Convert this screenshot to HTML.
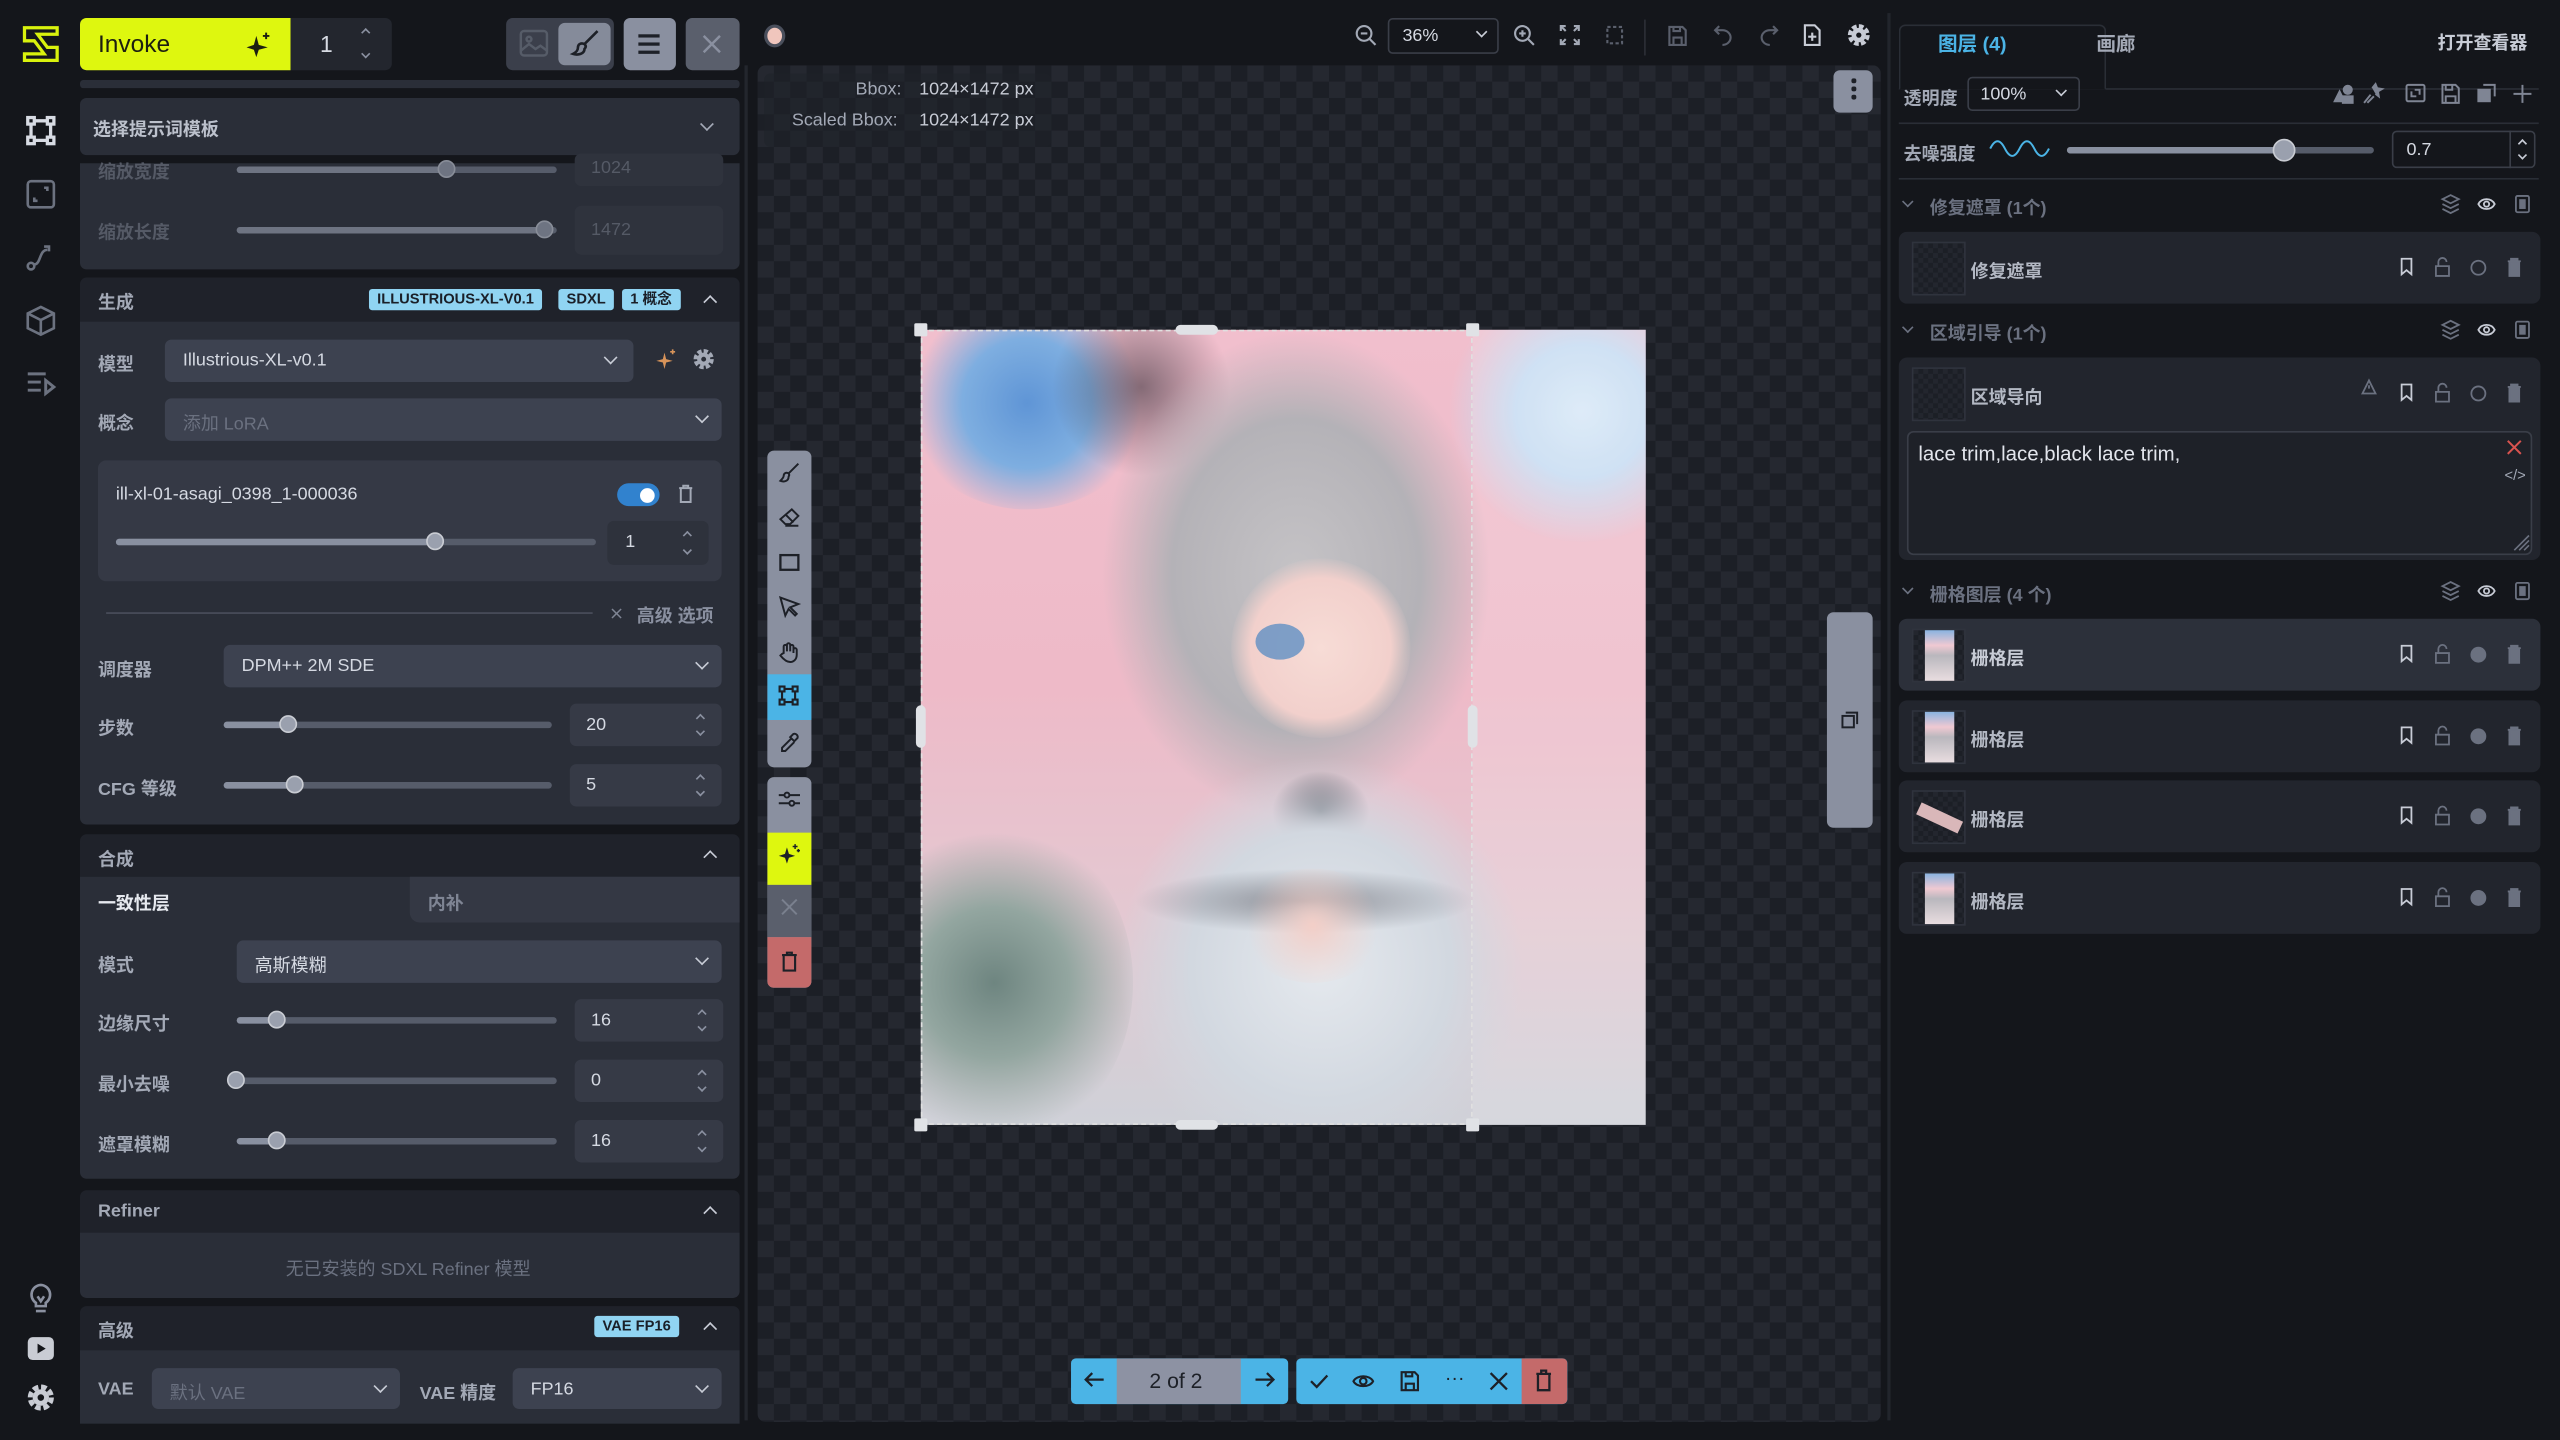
<!DOCTYPE html>
<html><head><meta charset="utf-8">
<style>
html,body{margin:0;padding:0;width:2560px;height:1440px;overflow:hidden;background:#14161b;}
#w{position:absolute;left:0;top:0;width:1568px;height:882px;transform:scale(1.632653);transform-origin:0 0;background:#14161b;font-family:"Liberation Sans","Noto Sans CJK SC",sans-serif;color:#c8ccd6;}
.a{position:absolute;}
.t{position:absolute;font-size:11px;white-space:nowrap;}
.lbl{position:absolute;font-size:11px;font-weight:bold;color:#a3a9b6;white-space:nowrap;}
.hdr{position:absolute;background:#1f222a;border-radius:4px 4px 0 0;}
.box{position:absolute;background:#2a2e38;}
.inp{position:absolute;background:#3d4250;border-radius:4px;}
.num{position:absolute;background:#363a46;border-radius:4px;font-size:11px;color:#d5d9e2;}
.num::before{content:"";position:absolute;right:11px;top:7px;width:3px;height:3px;border-left:1px solid #8a90a0;border-top:1px solid #8a90a0;transform:rotate(45deg);}
.num::after{content:"";position:absolute;right:11px;bottom:7px;width:3px;height:3px;border-right:1px solid #8a90a0;border-bottom:1px solid #8a90a0;transform:rotate(45deg);}
.track{position:absolute;height:4px;border-radius:2px;background:#565c6a;}
.fill{position:absolute;left:0;top:0;height:4px;border-radius:2px;background:#8990a0;}
.knob{position:absolute;width:11px;height:11px;border-radius:50%;background:#9aa0ae;border:1.5px solid #c9ccd3;box-sizing:border-box;top:-4px;}
.badge{position:absolute;background:#90d4f2;color:#1a1f28;font-size:9px;font-weight:bold;border-radius:2px;height:13px;line-height:13px;padding:0 5px;}
.chev{position:absolute;width:5px;height:5px;border-right:1.5px solid #c8ccd6;border-bottom:1.5px solid #c8ccd6;transform:rotate(45deg);}
.chevu{position:absolute;width:5px;height:5px;border-left:1.5px solid #c8ccd6;border-top:1.5px solid #c8ccd6;transform:rotate(45deg);}
.row{position:absolute;left:1163px;width:393px;background:#22252d;border-radius:5px;}
.thumb{position:absolute;left:8px;width:33px;height:33px;border:1px solid #2f333d;background:repeating-conic-gradient(#1c1f26 0 25%,#23262e 0 50%) 0 0/6px 6px;box-sizing:border-box;}
.bl{position:absolute;border-radius:50%;}
svg{position:absolute;overflow:visible;}
</style></head><body><div id="w">

<!-- left icon bar -->
<svg style="left:13px;top:15px" width="24" height="24" viewBox="0 0 24 24"><path d="M2 2H22V6H10L16 14H22V22H2V18H14L8 10H2Z" fill="none" stroke="#d9f20d" stroke-width="2"/></svg>
<svg style="left:16px;top:71px" width="18" height="18" viewBox="0 0 18 18" fill="none" stroke="#d7dbe3" stroke-width="2"><rect x="1" y="1" width="4" height="4"/><rect x="13" y="1" width="4" height="4"/><rect x="1" y="13" width="4" height="4"/><rect x="13" y="13" width="4" height="4"/><path d="M5 3H13M5 15H13M3 5V13M15 5V13"/></svg>
<svg style="left:16px;top:110px" width="18" height="18" viewBox="0 0 18 18" fill="none" stroke="#6c7280" stroke-width="1.6"><rect x="1" y="1" width="16" height="16" rx="2"/><path d="M11 5h2v2M5 11v2h2"/></svg>
<svg style="left:16px;top:148px" width="18" height="18" viewBox="0 0 18 18" fill="none" stroke="#6c7280" stroke-width="1.6"><circle cx="3" cy="15" r="2"/><path d="M5 14c4 0 3-9 8-9M11 3h3v3"/></svg>
<svg style="left:16px;top:187px" width="18" height="19" viewBox="0 0 18 19" fill="none" stroke="#6c7280" stroke-width="1.6"><path d="M9 1L17 5V14L9 18L1 14V5Z M1 5L9 9L17 5 M9 9V18"/></svg>
<svg style="left:16px;top:227px" width="18" height="16" viewBox="0 0 18 16" fill="none" stroke="#6c7280" stroke-width="1.8"><path d="M1 2H12M1 7H9M1 12H9M12 6V14L17 10Z"/></svg>
<svg style="left:17px;top:786px" width="16" height="18" viewBox="0 0 16 18" fill="none" stroke="#8a90a0" stroke-width="1.6"><path d="M8 1a6 6 0 0 0-3 11v2h6v-2A6 6 0 0 0 8 1zM5 17h6M6 8l2 3 2-3"/></svg>
<svg style="left:17px;top:819px" width="16" height="14" viewBox="0 0 16 14"><rect x="0" y="0" width="16" height="14" rx="3" fill="#c9ccd4"/><path d="M6 4L11 7L6 10Z" fill="#14161b"/></svg>
<svg style="left:17px;top:848px" width="16" height="16" viewBox="0 0 16 16"><circle cx="8" cy="8" r="6.5" fill="none" stroke="#c9ccd4" stroke-width="3" stroke-dasharray="3.4 1.7"/><circle cx="8" cy="8" r="5" fill="#c9ccd4"/><circle cx="8" cy="8" r="2" fill="#14161b"/></svg>

<!-- top left controls -->
<div class="a" style="left:49px;top:11px;width:129px;height:32px;background:#def70f;border-radius:4px 0 0 4px;"></div>
<div class="t" style="left:60px;top:19px;font-size:15px;color:#1c1f10;">Invoke</div>
<svg style="left:151px;top:20px" width="15" height="15" viewBox="0 0 15 15"><path d="M6 2L7.5 7.5L13 9L7.5 10.5L6 15L4.5 10.5L0 9L4.5 7.5Z" fill="#1c1f10"/><path d="M12 0v4M10 2h4" stroke="#1c1f10" stroke-width="1.2"/></svg>
<div class="a" style="left:178px;top:11px;width:62px;height:32px;background:#23262e;border-radius:0 4px 4px 0;"></div>
<div class="t" style="left:196px;top:19px;font-size:14px;color:#d7dbe3;">1</div>
<div class="chevu" style="left:222px;top:18px;width:3px;height:3px;border-color:#8a90a0;border-width:1px"></div>
<div class="chev" style="left:222px;top:31px;width:3px;height:3px;border-color:#8a90a0;border-width:1px"></div>
<div class="a" style="left:310px;top:11px;width:66px;height:32px;background:#3b3f4b;border-radius:4px;"></div>
<div class="a" style="left:342px;top:14px;width:32px;height:26px;background:#858b9a;border-radius:4px;"></div>
<svg style="left:318px;top:18px" width="18" height="17" viewBox="0 0 18 17" fill="none" stroke="#565c68" stroke-width="1.5"><rect x="1" y="1" width="16" height="15" rx="2"/><circle cx="6" cy="6" r="1.5"/><path d="M1 13l5-4 4 3 3-2 4 3"/></svg>
<svg style="left:350px;top:18px" width="17" height="17" viewBox="0 0 17 17" fill="none" stroke="#1d2027" stroke-width="1.6"><path d="M16 1L8 9M8 9c-2-1-4 0-4 2 0 2-1 3-3 4 3 1 7 0 7-3 1-1 1-2 0-3z"/></svg>
<div class="a" style="left:382px;top:11px;width:32px;height:32px;background:#8a90a0;border-radius:4px;"></div>
<div class="a" style="left:391px;top:21px;width:13px;height:2px;background:#1d2027;box-shadow:0 5px 0 #1d2027,0 10px 0 #1d2027;"></div>
<div class="a" style="left:420px;top:11px;width:33px;height:32px;background:#5a5f6c;border-radius:4px;"></div>
<svg style="left:430px;top:21px" width="12" height="12" viewBox="0 0 12 12" stroke="#8a90a0" stroke-width="1.5"><path d="M1 1L11 11M11 1L1 11"/></svg>
<div class="a" style="left:49px;top:49px;width:404px;height:5px;background:#2a2e38;border-radius:2px;"></div>

<!-- template select -->
<div class="a" style="left:49px;top:60px;width:404px;height:35px;background:#2a2e38;border-radius:4px;"></div>
<div class="lbl" style="left:57px;top:71px;color:#bcc1cc;">选择提示词模板</div>
<div class="chev" style="left:430px;top:73px;border-color:#a3a9b6;"></div>

<!-- scroll remnant -->
<div class="a" style="left:49px;top:100px;width:404px;height:65px;background:#2a2e38;border-radius:0 0 4px 4px;"></div>
<div class="lbl" style="left:60px;top:97px;color:#555a66;">缩放宽度</div>
<div class="track" style="left:145px;top:102px;width:196px;"><div class="fill" style="width:128px;background:#6e7482"></div><div class="knob" style="left:123px;background:#6e7482;border-color:#888d98"></div></div>
<div class="a" style="left:352px;top:94px;width:91px;height:20px;background:#2f333d;border-radius:4px;"></div>
<div class="t" style="left:362px;top:97px;color:#555a66;">1024</div>
<div class="lbl" style="left:60px;top:134px;color:#555a66;">缩放长度</div>
<div class="track" style="left:145px;top:139px;width:196px;"><div class="fill" style="width:190px;background:#6e7482"></div><div class="knob" style="left:183px;background:#6e7482;border-color:#888d98"></div></div>
<div class="a" style="left:352px;top:126px;width:91px;height:30px;background:#2f333d;border-radius:4px;"></div>
<div class="t" style="left:362px;top:135px;color:#555a66;">1472</div>

<!-- 生成 -->
<div class="hdr" style="left:49px;top:170px;width:404px;height:27px;"></div>
<div class="lbl" style="left:60px;top:177px;">生成</div>
<div class="badge" style="left:226px;top:177px;">ILLUSTRIOUS-XL-V0.1</div>
<div class="badge" style="left:342px;top:177px;">SDXL</div>
<div class="badge" style="left:381px;top:177px;">1 概念</div>
<div class="chevu" style="left:432px;top:182px;"></div>
<div class="box" style="left:49px;top:197px;width:404px;height:308px;border-radius:0 0 4px 4px;"></div>
<div class="lbl" style="left:60px;top:215px;">模型</div>
<div class="inp" style="left:101px;top:208px;width:287px;height:26px;"></div>
<div class="t" style="left:112px;top:215px;color:#d5d9e2;">Illustrious-XL-v0.1</div>
<div class="chev" style="left:371px;top:216px;"></div>
<svg style="left:402px;top:214px" width="12" height="12" viewBox="0 0 12 12"><path d="M5 2L6 6L10 7L6 8L5 12L4 8L0 7L4 6Z" fill="#d8945a"/><path d="M10 0v3M8.5 1.5h3" stroke="#d8945a"/></svg>
<svg style="left:425px;top:214px" width="12" height="12" viewBox="0 0 12 12"><circle cx="6" cy="6" r="5" fill="none" stroke="#a3a9b6" stroke-width="2.4" stroke-dasharray="2.6 1.3"/><circle cx="6" cy="6" r="4" fill="#a3a9b6"/><circle cx="6" cy="6" r="1.5" fill="#2a2e38"/></svg>
<div class="lbl" style="left:60px;top:251px;">概念</div>
<div class="inp" style="left:101px;top:244px;width:341px;height:26px;"></div>
<div class="t" style="left:112px;top:251px;color:#6b7180;">添加 LoRA</div>
<div class="chev" style="left:427px;top:252px;"></div>
<div class="a" style="left:60px;top:282px;width:382px;height:74px;background:#353945;border-radius:5px;"></div>
<div class="t" style="left:71px;top:297px;color:#d5d9e2;">ill-xl-01-asagi_0398_1-000036</div>
<div class="a" style="left:378px;top:296px;width:26px;height:14px;background:#3182ce;border-radius:7px;"></div>
<div class="a" style="left:392px;top:299px;width:9px;height:9px;background:#fff;border-radius:50%;"></div>
<svg style="left:416px;top:297px" width="8" height="11" viewBox="0 0 8 11" fill="none" stroke="#a3a9b6" stroke-width="1.2"><path d="M0 2H8M2.5 2V0.5H5.5V2M1 2V10.5H7V2"/></svg>
<div class="track" style="left:71px;top:330px;width:294px;"><div class="fill" style="width:197px"></div><div class="knob" style="left:190px"></div></div>
<div class="num" style="left:372px;top:319px;width:62px;height:27px;background:#2e323c;"></div>
<div class="t" style="left:383px;top:326px;color:#d5d9e2;">1</div>
<div class="a" style="left:65px;top:375px;width:298px;height:1px;background:#4a4f5c;"></div>
<div class="t" style="left:373px;top:369px;color:#7f8594;">⨯</div>
<div class="lbl" style="left:390px;top:369px;color:#8a90a0;">高级 选项</div>
<div class="lbl" style="left:60px;top:402px;">调度器</div>
<div class="inp" style="left:137px;top:395px;width:305px;height:26px;"></div>
<div class="t" style="left:148px;top:402px;color:#d5d9e2;">DPM++ 2M SDE</div>
<div class="chev" style="left:427px;top:403px;"></div>
<div class="lbl" style="left:60px;top:438px;">步数</div>
<div class="track" style="left:137px;top:442px;width:201px;"><div class="fill" style="width:40px"></div><div class="knob" style="left:34px"></div></div>
<div class="num" style="left:349px;top:431px;width:93px;height:26px;"></div>
<div class="t" style="left:359px;top:438px;color:#d5d9e2;">20</div>
<div class="lbl" style="left:60px;top:475px;">CFG 等级</div>
<div class="track" style="left:137px;top:479px;width:201px;"><div class="fill" style="width:44px"></div><div class="knob" style="left:38px"></div></div>
<div class="num" style="left:349px;top:468px;width:93px;height:26px;"></div>
<div class="t" style="left:359px;top:475px;color:#d5d9e2;">5</div>

<!-- 合成 -->
<div class="hdr" style="left:49px;top:511px;width:404px;height:26px;"></div>
<div class="lbl" style="left:60px;top:518px;">合成</div>
<div class="chevu" style="left:432px;top:522px;"></div>
<div class="box" style="left:49px;top:537px;width:404px;height:185px;border-radius:0 0 4px 4px;"></div>
<div class="a" style="left:251px;top:537px;width:202px;height:28px;background:#343844;border-radius:0 0 0 6px;"></div>
<div class="lbl" style="left:60px;top:545px;color:#e6e9ef;">一致性层</div>
<div class="lbl" style="left:262px;top:545px;color:#7f8594;">内补</div>
<div class="lbl" style="left:60px;top:583px;">模式</div>
<div class="inp" style="left:145px;top:576px;width:297px;height:26px;"></div>
<div class="t" style="left:156px;top:583px;color:#d5d9e2;">高斯模糊</div>
<div class="chev" style="left:427px;top:584px;"></div>
<div class="lbl" style="left:60px;top:619px;">边缘尺寸</div>
<div class="track" style="left:145px;top:623px;width:196px;"><div class="fill" style="width:27px"></div><div class="knob" style="left:19px"></div></div>
<div class="num" style="left:352px;top:612px;width:91px;height:26px;"></div>
<div class="t" style="left:362px;top:619px;color:#d5d9e2;">16</div>
<div class="lbl" style="left:60px;top:656px;">最小去噪</div>
<div class="track" style="left:145px;top:660px;width:196px;"><div class="knob" style="left:-6px"></div></div>
<div class="num" style="left:352px;top:649px;width:91px;height:26px;"></div>
<div class="t" style="left:362px;top:656px;color:#d5d9e2;">0</div>
<div class="lbl" style="left:60px;top:693px;">遮罩模糊</div>
<div class="track" style="left:145px;top:697px;width:196px;"><div class="fill" style="width:27px"></div><div class="knob" style="left:19px"></div></div>
<div class="num" style="left:352px;top:686px;width:91px;height:26px;"></div>
<div class="t" style="left:362px;top:693px;color:#d5d9e2;">16</div>

<!-- Refiner -->
<div class="hdr" style="left:49px;top:729px;width:404px;height:26px;"></div>
<div class="lbl" style="left:60px;top:736px;">Refiner</div>
<div class="chevu" style="left:432px;top:740px;"></div>
<div class="box" style="left:49px;top:755px;width:404px;height:40px;border-radius:0 0 4px 4px;"></div>
<div class="t" style="left:175px;top:769px;color:#6b7180;">无已安装的 SDXL Refiner 模型</div>

<!-- 高级 -->
<div class="hdr" style="left:49px;top:800px;width:404px;height:27px;"></div>
<div class="lbl" style="left:60px;top:807px;">高级</div>
<div class="badge" style="left:364px;top:806px;">VAE FP16</div>
<div class="chevu" style="left:432px;top:811px;"></div>
<div class="box" style="left:49px;top:827px;width:404px;height:45px;"></div>
<div class="lbl" style="left:60px;top:845px;">VAE</div>
<div class="inp" style="left:93px;top:838px;width:152px;height:25px;"></div>
<div class="t" style="left:104px;top:845px;color:#6b7180;">默认 VAE</div>
<div class="chev" style="left:230px;top:846px;"></div>
<div class="lbl" style="left:257px;top:845px;">VAE 精度</div>
<div class="inp" style="left:314px;top:838px;width:128px;height:25px;"></div>
<div class="t" style="left:325px;top:845px;color:#d5d9e2;">FP16</div>
<div class="chev" style="left:427px;top:846px;"></div>
<div class="a" style="left:456px;top:40px;width:2px;height:830px;background:#23262d;"></div>

<!-- canvas toolbar -->
<div class="a" style="left:468px;top:15px;width:13px;height:14px;border-radius:50%;background:#f0c6bd;border:2px solid #4a4f5c;box-sizing:border-box;"></div>
<svg style="left:830px;top:15px" width="13" height="13" viewBox="0 0 13 13" fill="none" stroke="#a3a9b6" stroke-width="1.3"><circle cx="5.5" cy="5.5" r="4.5"/><path d="M9 9l3.5 3.5M3.5 5.5h4"/></svg>
<div class="a" style="left:850px;top:11px;width:68px;height:22px;border:1px solid #3a3e48;border-radius:3px;box-sizing:border-box;"></div>
<div class="t" style="left:859px;top:16px;color:#d5d9e2;">36%</div>
<div class="chev" style="left:905px;top:17px;width:4px;height:4px;border-width:1px;"></div>
<svg style="left:927px;top:15px" width="13" height="13" viewBox="0 0 13 13" fill="none" stroke="#a3a9b6" stroke-width="1.3"><circle cx="5.5" cy="5.5" r="4.5"/><path d="M9 9l3.5 3.5M3.5 5.5h4M5.5 3.5v4"/></svg>
<svg style="left:956px;top:16px" width="11" height="11" viewBox="0 0 11 11" fill="none" stroke="#a3a9b6" stroke-width="1.3"><path d="M0 3V0H3M8 0H11V3M11 8V11H8M3 11H0V8M3 3L0 0M8 3L11 0M8 8L11 11M3 8L0 11"/></svg>
<svg style="left:984px;top:16px" width="10" height="11" viewBox="0 0 10 11" fill="none" stroke="#5a5f6c" stroke-width="1.3" stroke-dasharray="2 1.5"><rect x="0.5" y="0.5" width="9" height="10"/></svg>
<div class="a" style="left:1007px;top:12px;width:1px;height:22px;background:#2c2f37;"></div>
<svg style="left:1022px;top:16px" width="11" height="12" viewBox="0 0 11 12" fill="none" stroke="#5a5f6c" stroke-width="1.3"><path d="M0.5 0.5H8.5L10.5 2.5V11.5H0.5Z M3 11.5V7H8V11.5M3 0.5V3H7V0.5"/></svg>
<svg style="left:1050px;top:15px" width="11" height="13" viewBox="0 0 11 13" fill="none" stroke="#5a5f6c" stroke-width="1.3"><path d="M3 1L0.5 3.5L3 6M1 3.5H5a5 4.5 0 0 1 0 9"/></svg>
<svg style="left:1078px;top:15px" width="11" height="13" viewBox="0 0 11 13" fill="none" stroke="#5a5f6c" stroke-width="1.3"><path d="M8 1L10.5 3.5L8 6M10 3.5H6a5 4.5 0 0 0 0 9"/></svg>
<svg style="left:1105px;top:15px" width="10" height="13" viewBox="0 0 10 13" fill="none" stroke="#c8ccd6" stroke-width="1.3"><path d="M0.5 0.5H6.5L9.5 3.5V12.5H0.5Z M5 5V10M2.5 7.5H7.5"/></svg>
<svg style="left:1132px;top:15px" width="13" height="13" viewBox="0 0 13 13"><circle cx="6.5" cy="6.5" r="5.5" fill="none" stroke="#c8ccd6" stroke-width="2.4" stroke-dasharray="2.9 1.4"/><circle cx="6.5" cy="6.5" r="4.4" fill="#c8ccd6"/><circle cx="6.5" cy="6.5" r="1.6" fill="#14161b"/></svg>

<!-- canvas -->
<div class="a" style="left:464px;top:40px;width:688px;height:831px;border-radius:5px;background:repeating-conic-gradient(#1c1f26 0 25%,#252830 0 50%) 0 0/20px 20px;"></div>
<div class="a" style="left:468px;top:45px;width:176px;height:45px;background:rgba(30,33,40,.5);border-radius:4px;"></div>
<div class="t" style="left:524px;top:49px;color:#a3a9b6;">Bbox:</div>
<div class="t" style="left:563px;top:49px;color:#c8ccd6;">1024×1472 px</div>
<div class="t" style="left:485px;top:68px;color:#a3a9b6;">Scaled Bbox:</div>
<div class="t" style="left:563px;top:68px;color:#c8ccd6;">1024×1472 px</div>
<div class="a" style="left:1123px;top:43px;width:24px;height:26px;background:#8a90a0;border-radius:4px;"></div>
<div class="a" style="left:1134px;top:48px;width:2.5px;height:2.5px;background:#1d2027;border-radius:50%;box-shadow:0 5px 0 #1d2027,0 10px 0 #1d2027;"></div>
<div class="a" style="left:1119px;top:375px;width:28px;height:132px;background:#8a90a0;border-radius:4px;"></div>
<svg style="left:1128px;top:436px" width="10" height="10" viewBox="0 0 10 10" fill="none" stroke="#1d2027" stroke-width="1.2"><rect x="0.5" y="2.5" width="7" height="7"/><path d="M2.5 0.5H9.5V7.5"/></svg>

<!-- image -->
<div class="a" style="left:564px;top:202px;width:444px;height:487px;overflow:hidden;background:linear-gradient(180deg,#f1bfcd 0%,#eebac8 45%,#e3c9d2 75%,#cfd1d8 100%);">
 <div class="bl" style="left:-10px;top:-20px;width:150px;height:130px;background:radial-gradient(circle,#5f95d6 0,#7eaee0 40%,rgba(240,190,205,0) 70%);"></div>
 <div class="bl" style="left:80px;top:-20px;width:110px;height:110px;background:radial-gradient(circle,rgba(60,50,60,.6) 0,rgba(60,50,60,0) 70%);"></div>
 <div class="bl" style="left:320px;top:-30px;width:170px;height:160px;background:radial-gradient(circle,#d8e8f7 0,#c7dcf2 35%,rgba(240,200,215,0) 70%);"></div>
 <div class="bl" style="left:-40px;top:300px;width:170px;height:200px;background:radial-gradient(circle,#6e8580 0,#93a6a0 35%,rgba(220,200,210,0) 70%);"></div>
 <div class="a" style="left:338px;top:0;width:106px;height:487px;background:rgba(255,255,255,.15);"></div>
 <div class="bl" style="left:110px;top:0;width:240px;height:300px;background:radial-gradient(ellipse,#c5c3c6 0,#b4b2b7 45%,rgba(180,178,185,0) 70%);"></div>
 <div class="bl" style="left:190px;top:140px;width:110px;height:110px;background:radial-gradient(circle,#f7dcd6 0,#f2d0cc 55%,rgba(240,205,205,0) 72%);"></div>
 <div class="bl" style="left:205px;top:180px;width:30px;height:22px;background:#4c86c2;opacity:.7;"></div>
 <div class="a" style="left:215px;top:270px;width:60px;height:50px;background:radial-gradient(ellipse,#2a2c36 0,rgba(40,42,54,0) 70%);"></div>
 <div class="bl" style="left:120px;top:260px;width:250px;height:260px;background:radial-gradient(ellipse,#e5e9ee 0,#d2d8e0 45%,rgba(200,205,215,0) 70%);"></div>
 <div class="a" style="left:130px;top:330px;width:210px;height:40px;background:radial-gradient(ellipse,rgba(50,50,60,.45) 0,rgba(50,50,60,0) 70%);"></div>
 <div class="bl" style="left:195px;top:330px;width:90px;height:70px;background:radial-gradient(circle,#f3cfc8 0,rgba(240,205,200,0) 70%);"></div>
</div>
<div class="a" style="left:564px;top:202px;width:338px;height:487px;border:1px dashed #e0e0e0;box-sizing:border-box;"></div>
<div class="a" style="left:560px;top:198px;width:8px;height:8px;background:#e0e2e6;border-radius:1px;"></div>
<div class="a" style="left:898px;top:198px;width:8px;height:8px;background:#e0e2e6;border-radius:1px;"></div>
<div class="a" style="left:560px;top:685px;width:8px;height:8px;background:#e0e2e6;border-radius:1px;"></div>
<div class="a" style="left:898px;top:685px;width:8px;height:8px;background:#e0e2e6;border-radius:1px;"></div>
<div class="a" style="left:720px;top:199px;width:26px;height:6px;background:#e0e2e6;border-radius:3px;"></div>
<div class="a" style="left:720px;top:686px;width:26px;height:6px;background:#e0e2e6;border-radius:3px;"></div>
<div class="a" style="left:561px;top:432px;width:6px;height:26px;background:#e0e2e6;border-radius:3px;"></div>
<div class="a" style="left:899px;top:432px;width:6px;height:26px;background:#e0e2e6;border-radius:3px;"></div>

<!-- tool bar -->
<div class="a" style="left:470px;top:276px;width:27px;height:194px;background:#8a90a0;border-radius:4px;overflow:hidden;">
 <div class="a" style="left:0;top:137px;width:27px;height:28px;background:#4bb4e6;"></div>
</div>
<svg style="left:477px;top:283px" width="13" height="13" viewBox="0 0 13 13" fill="none" stroke="#1d2027" stroke-width="1.2"><path d="M12 1L6 7M6 7c-1.5-1-3 0-3 1.5 0 1-1 2-2 3 2.5 1 5 0 5-2.5 .5-.8.5-1.5 0-2z"/></svg>
<svg style="left:477px;top:311px" width="13" height="12" viewBox="0 0 13 12" fill="none" stroke="#1d2027" stroke-width="1.2"><path d="M8 1L12 5L7 10H4L1 7ZM4 4L9 9M4 11H12"/></svg>
<svg style="left:477px;top:339px" width="13" height="11" viewBox="0 0 13 11" fill="none" stroke="#1d2027" stroke-width="1.4"><rect x="1" y="1" width="11" height="9"/></svg>
<svg style="left:477px;top:365px" width="13" height="13" viewBox="0 0 13 13" fill="none" stroke="#1d2027" stroke-width="1.2"><path d="M1 1L12 5L7 7L11 11L10 12L6 8L4 12Z"/></svg>
<svg style="left:477px;top:393px" width="13" height="13" viewBox="0 0 13 13" fill="none" stroke="#1d2027" stroke-width="1.2"><path d="M3 7V3a1 1 0 0 1 2 0V6V2a1 1 0 0 1 2 0V6V3a1 1 0 0 1 2 0V7V5a1 1 0 0 1 2 0V8c0 3-2 4.5-4 4.5S3 11 1 8.5L2 7.5Z"/></svg>
<svg style="left:477px;top:420px" width="12" height="12" viewBox="0 0 12 12" fill="none" stroke="#1d2027" stroke-width="1.3"><rect x="0.5" y="0.5" width="3" height="3"/><rect x="8.5" y="0.5" width="3" height="3"/><rect x="0.5" y="8.5" width="3" height="3"/><rect x="8.5" y="8.5" width="3" height="3"/><path d="M3.5 2H8.5M3.5 10H8.5M2 3.5V8.5M10 3.5V8.5"/></svg>
<svg style="left:477px;top:448px" width="13" height="13" viewBox="0 0 13 13" fill="none" stroke="#1d2027" stroke-width="1.2"><path d="M9 1.5a2 2 0 0 1 2.5 2.5L9.5 6L7 3.5ZM7.5 4.5L2 10V12H4L9.5 6.5"/></svg>
<div class="a" style="left:470px;top:476px;width:27px;height:129px;background:#8a90a0;border-radius:4px;overflow:hidden;">
 <div class="a" style="left:0;top:34px;width:27px;height:32px;background:#def70f;"></div>
 <div class="a" style="left:0;top:66px;width:27px;height:32px;background:#5a5f6c;"></div>
 <div class="a" style="left:0;top:98px;width:27px;height:31px;background:#c46a6a;"></div>
</div>
<svg style="left:477px;top:484px" width="13" height="11" viewBox="0 0 13 11" fill="none" stroke="#1d2027" stroke-width="1.2"><path d="M0 3H13M0 8H13"/><circle cx="5" cy="3" r="1.5" fill="#8a90a0"/><circle cx="8" cy="8" r="1.5" fill="#8a90a0"/></svg>
<svg style="left:477px;top:516px" width="13" height="13" viewBox="0 0 13 13"><path d="M5 3L6.2 7L10 8.2L6.2 9.4L5 13L3.8 9.4L0 8.2L3.8 7Z" fill="#1d2027"/><path d="M10 1v3M8.5 2.5h3M12 4v2M11 5h2" stroke="#1d2027" stroke-width="0.9"/></svg>
<svg style="left:479px;top:551px" width="9" height="9" viewBox="0 0 9 9" stroke="#7a808e" stroke-width="1.2"><path d="M0 0L9 9M9 0L0 9"/></svg>
<svg style="left:479px;top:583px" width="9" height="12" viewBox="0 0 9 12" fill="none" stroke="#1d2027" stroke-width="1.3"><path d="M0 2H9M3 2V0.5H6V2M1 2V11.5H8V2"/></svg>

<!-- bottom nav -->
<div class="a" style="left:656px;top:832px;width:133px;height:28px;background:#4bb4e6;border-radius:3px;overflow:hidden;"><div class="a" style="left:28px;top:0;width:76px;height:28px;background:#8d92a3;"></div></div>
<svg style="left:664px;top:840px" width="12" height="10" viewBox="0 0 12 10" fill="none" stroke="#1d2027" stroke-width="1.4"><path d="M12 5H1M5 1L1 5L5 9"/></svg>
<div class="t" style="left:704px;top:838px;font-size:13px;color:#1d2027;">2 of 2</div>
<svg style="left:769px;top:840px" width="12" height="10" viewBox="0 0 12 10" fill="none" stroke="#1d2027" stroke-width="1.4"><path d="M0 5H11M7 1L11 5L7 9"/></svg>
<div class="a" style="left:794px;top:832px;width:166px;height:28px;background:#4bb4e6;border-radius:3px;overflow:hidden;"><div class="a" style="left:138px;top:0;width:28px;height:28px;background:#c46a6a;"></div></div>
<svg style="left:802px;top:841px" width="12" height="10" viewBox="0 0 12 10" fill="none" stroke="#1d2027" stroke-width="1.4"><path d="M1 5L4.5 8.5L11 1.5"/></svg>
<svg style="left:828px;top:841px" width="14" height="10" viewBox="0 0 14 10" fill="none" stroke="#1d2027" stroke-width="1.3"><path d="M1 5C3 1 11 1 13 5C11 9 3 9 1 5Z"/><circle cx="7" cy="5" r="2"/></svg>
<svg style="left:858px;top:840px" width="11" height="12" viewBox="0 0 11 12" fill="none" stroke="#1d2027" stroke-width="1.3"><path d="M0.5 0.5H8.5L10.5 2.5V11.5H0.5Z M3 11.5V7.5H8V11.5M3 0.5V3H7V0.5"/></svg>
<div class="t" style="left:885px;top:837px;font-size:12px;color:#1d2027;">···</div>
<svg style="left:913px;top:841px" width="10" height="10" viewBox="0 0 10 10" stroke="#1d2027" stroke-width="1.4"><path d="M0 0L10 10M10 0L0 10"/></svg>
<svg style="left:941px;top:839px" width="9" height="13" viewBox="0 0 9 13" fill="none" stroke="#1d2027" stroke-width="1.4"><path d="M0 2.5H9M3 2.5V0.5H6V2.5M1 2.5V12.5H8V2.5"/></svg>

<!-- right panel -->
<div class="a" style="left:1156px;top:8px;width:2px;height:862px;background:#22252c;"></div>
<div class="a" style="left:1163px;top:54px;width:392px;height:1px;background:#2a2e36;"></div>
<div class="a" style="left:1163px;top:15px;width:127px;height:40px;border:1px solid #2a2e36;border-bottom:1px solid #14161b;border-radius:4px 4px 0 0;background:#14161b;box-sizing:border-box;"></div>
<div class="lbl" style="left:1187px;top:18px;color:#4bb4e6;font-size:12px;">图层 (4)</div>
<div class="lbl" style="left:1284px;top:18px;color:#a3a9b6;font-size:12px;">画廊</div>
<div class="lbl" style="left:1493px;top:18px;color:#c8ccd6;">打开查看器</div>
<div class="lbl" style="left:1166px;top:52px;">透明度</div>
<div class="a" style="left:1205px;top:47px;width:69px;height:21px;border:1px solid #3a3e48;border-radius:3px;box-sizing:border-box;"></div>
<div class="t" style="left:1213px;top:52px;color:#d5d9e2;">100%</div>
<div class="chev" style="left:1260px;top:53px;width:4px;height:4px;border-width:1px;"></div>
<svg style="left:1429px;top:51px" width="120" height="13" viewBox="0 0 120 13" fill="none" stroke="#7f8594" stroke-width="1.2">
<path d="M1 11L4 5L7 11Z" fill="#7f8594"/><circle cx="9" cy="4" r="2.5" fill="#7f8594"/><rect x="6" y="8" width="6" height="4" fill="#7f8594"/>
<path d="M24 3L26 0.5L27 3L30 3.5L27.5 5L28 8L26 6.5" fill="#7f8594"/><path d="M23 7L19 12M25 8L21 12"/>
<rect x="45" y="1" width="11" height="10" rx="1"/><path d="M48 5V8H51M53 7V4H50"/>
<path d="M67 1H75L77 3V12H67Z M69 12V8H75V12M69 1V4H73V1"/>
<rect x="89" y="4" width="7" height="7" fill="#7f8594"/><path d="M92 1H99V8"/>
<path d="M116 1V12M110.5 6.5H121.5"/></svg>
<div class="a" style="left:1163px;top:75px;width:392px;height:1px;background:#2a2e36;"></div>
<div class="lbl" style="left:1166px;top:86px;">去噪强度</div>
<svg style="left:1218px;top:85px" width="38" height="12" viewBox="0 0 38 12" fill="none" stroke="#4bb4e6" stroke-width="1.2"><path d="M1 6C4 0 7 0 10 6S16 12 19 6S25 0 28 6S34 12 37 6"/></svg>
<div class="track" style="left:1266px;top:90px;width:188px;"><div class="fill" style="width:132px"></div><div class="knob" style="left:126px;width:14px;height:14px;top:-5px"></div></div>
<div class="a" style="left:1465px;top:80px;width:88px;height:23px;border:1px solid #3a3e48;border-radius:3px;box-sizing:border-box;"></div>
<div class="a" style="left:1537px;top:80px;width:1px;height:23px;background:#3a3e48;"></div>
<div class="t" style="left:1474px;top:86px;color:#d5d9e2;">0.7</div>
<div class="chevu" style="left:1543px;top:86px;width:3px;height:3px;border-width:1px;"></div>
<div class="chev" style="left:1543px;top:93px;width:3px;height:3px;border-width:1px;"></div>
<div class="a" style="left:1163px;top:109px;width:392px;height:1px;background:#2a2e36;"></div>

<div class="chev" style="left:1166px;top:121px;width:4px;height:4px;border-color:#6b7180;border-width:1px;"></div>
<div class="lbl" style="left:1182px;top:119px;color:#6b7180;">修复遮罩 (1个)</div>
<div class="chev" style="left:1166px;top:198px;width:4px;height:4px;border-color:#6b7180;border-width:1px;"></div>
<div class="lbl" style="left:1182px;top:196px;color:#6b7180;">区域引导 (1个)</div>
<div class="chev" style="left:1166px;top:358px;width:4px;height:4px;border-color:#6b7180;border-width:1px;"></div>
<div class="lbl" style="left:1182px;top:356px;color:#6b7180;">栅格图层 (4 个)</div>
<svg style="left:1494px;top:119px" width="58" height="252" viewBox="0 0 58 252" fill="none" stroke-width="1.1">
<g id="gi"><path d="M2 3L7 0.5L12 3L7 5.5Z M2 6L7 8.5L12 6M2 9L7 11.5L12 9" stroke="#6b7180"/><path d="M24 6C26 2 32 2 34 6C32 10 26 10 24 6Z" stroke="#c8ccd6"/><circle cx="29" cy="6" r="1.6" stroke="#c8ccd6"/><rect x="47" y="1" width="8" height="10" rx="1" stroke="#6b7180"/><rect x="49" y="3" width="4" height="6" fill="#6b7180"/></g>
<use href="#gi" y="77"/><use href="#gi" y="237"/></svg>

<div class="row" style="top:142px;height:44px;"></div>
<div class="thumb" style="left:1171px;top:148px;"></div>
<div class="lbl" style="left:1207px;top:158px;color:#b3b8c3;">修复遮罩</div>
<div class="row" style="top:219px;height:124px;"></div>
<div class="thumb" style="left:1171px;top:225px;"></div>
<div class="lbl" style="left:1207px;top:235px;color:#b3b8c3;">区域导向</div>
<div class="a" style="left:1168px;top:264px;width:383px;height:76px;border:1px solid #3a3e48;border-radius:4px;box-sizing:border-box;background:#1e2128;"></div>
<div class="t" style="left:1175px;top:271px;font-size:12.5px;color:#e2e5ec;">lace trim,lace,black lace trim,</div>
<svg style="left:1536px;top:270px" width="8" height="8" viewBox="0 0 8 8" stroke="#d9534f" stroke-width="1.2"><path d="M0 0L8 8M8 0L0 8"/></svg>
<div class="t" style="left:1534px;top:286px;font-size:9px;color:#a3a9b6;">&lt;/&gt;</div>
<svg style="left:1539px;top:327px" width="11" height="11" viewBox="0 0 11 11" stroke="#6b7180"><path d="M1 10L10 1M4 10L10 4M7 10L10 7"/></svg>

<div class="row" style="top:379px;height:44px;background:#2c303a;"></div>
<div class="row" style="top:429px;height:44px;"></div>
<div class="row" style="top:478px;height:44px;"></div>
<div class="row" style="top:528px;height:44px;"></div>
<div class="thumb" style="left:1171px;top:385px;"><div class="a" style="left:7px;top:0;width:18px;height:31px;background:linear-gradient(180deg,#8ab3e0,#f0c9d2 30%,#b9b7bd 50%,#e9dde0);"></div></div>
<div class="thumb" style="left:1171px;top:435px;"><div class="a" style="left:7px;top:0;width:18px;height:31px;background:linear-gradient(180deg,#8ab3e0,#f0c9d2 30%,#b9b7bd 50%,#e9dde0);"></div></div>
<div class="thumb" style="left:1171px;top:484px;"><div class="a" style="left:2px;top:12px;width:28px;height:8px;background:#d9b7b9;transform:rotate(25deg);"></div></div>
<div class="thumb" style="left:1171px;top:534px;"><div class="a" style="left:7px;top:0;width:18px;height:31px;background:linear-gradient(180deg,#8ab3e0,#f0c9d2 30%,#b9b7bd 50%,#e9dde0);"></div></div>
<div class="lbl" style="left:1207px;top:395px;color:#c8ccd6;">栅格层</div>
<div class="lbl" style="left:1207px;top:445px;color:#b3b8c3;">栅格层</div>
<div class="lbl" style="left:1207px;top:494px;color:#b3b8c3;">栅格层</div>
<div class="lbl" style="left:1207px;top:544px;color:#b3b8c3;">栅格层</div>
<svg style="left:1446px;top:158px" width="102" height="400" viewBox="0 0 102 400" fill="none" stroke-width="1.1">
<g id="ri"><path d="M25 0.5H31V10L28 7.5L25 10Z" stroke="#c8ccd6"/><path d="M46 5H54V11H46ZM47.5 5V2.5a2.5 2.5 0 0 1 5 0" stroke="#6b7180"/><circle cx="72" cy="6" r="4.3" stroke="#6b7180"/><path d="M90 2H98M92 2V0.5H96V2M91 2V11H97V2Z" stroke="#6b7180" fill="#6b7180"/></g>
<use href="#ri" y="77"/>
<g transform="translate(0,237)"><use href="#ri"/><circle cx="72" cy="6" r="4.3" fill="#6b7180"/></g>
<g transform="translate(0,287)"><use href="#ri"/><circle cx="72" cy="6" r="4.3" fill="#6b7180"/></g>
<g transform="translate(0,336)"><use href="#ri"/><circle cx="72" cy="6" r="4.3" fill="#6b7180"/></g>
<g transform="translate(0,386)"><use href="#ri"/><circle cx="72" cy="6" r="4.3" fill="#6b7180"/></g>
<path d="M1 83L5 75L9 83Z M5 78V80" stroke="#6b7180"/>
</svg>
</div></body></html>
